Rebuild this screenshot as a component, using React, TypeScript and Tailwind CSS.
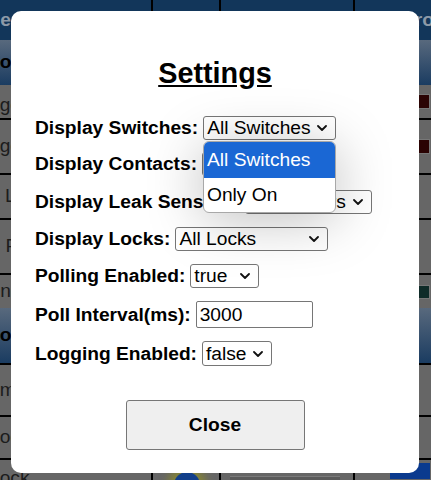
import React from "react";

function Chevron() {
  return (
    <svg width="10" height="6" viewBox="0 0 10 6" className="shrink-0">
      <path d="M1 1 L5 5 L9 1" fill="none" stroke="#111" strokeWidth="1.8" strokeLinecap="round" strokeLinejoin="round" />
    </svg>
  );
}

function FakeSelect({ text, w }: { text: string; w: string }) {
  return (
    <div className={`flex items-center justify-between h-[24px] ${w} border border-[#767676] rounded-[3px] bg-white pl-[3px] pr-[8px] text-[19.2px] leading-none text-black`}>
      <span>{text}</span>
      <Chevron />
    </div>
  );
}

function Cells({ c1, c2, c3, c4, cls }: { c1?: React.ReactNode; c2?: React.ReactNode; c3?: React.ReactNode; c4?: React.ReactNode; cls: string }) {
  return (
    <div className={`flex shrink-0 ${cls}`}>
      <div className="w-[153px] shrink-0 overflow-hidden flex items-center border-r-2 border-black">{c1}</div>
      <div className="w-[68px] shrink-0 overflow-hidden flex items-start border-r-2 border-black">{c2}</div>
      <div className="w-[134px] shrink-0 overflow-hidden flex items-start border-r-2 border-black">{c3}</div>
      <div className="w-[76px] shrink-0 overflow-hidden flex items-center">{c4}</div>
    </div>
  );
}

const red = <div className="ml-auto mr-[1px] w-[40px] h-[15px] bg-[#2a0303] border border-[#777]" />;

export default function App() {
  return (
    <div className="relative w-[431px] h-[480px] overflow-hidden bg-[#666666] font-['Liberation_Sans',Arial,sans-serif]">
      {/* dimmed background table */}
      <div className="flex flex-col text-[19.2px] whitespace-nowrap">
        <Cells
          cls="h-[40px] bg-[#12365a] text-[#8c99a7] font-bold"
          c1={<span className="ml-[-35px] flex w-full justify-between pr-[8px]"><span>Zone</span><span>Ty</span></span>}
          c2={<span className="ml-[12px] mt-[8px]">Stat</span>}
          c3={<span className="ml-[18px] mt-[8px]">Switch / Toggle</span>}
          c4={<span className="ml-[16px]">Control</span>}
        />
        <Cells
          cls="h-[45px] bg-gradient-to-b from-[#58697d] to-[#1a3c61] font-bold text-black"
          c1={<span className="ml-[-14px]">Doors</span>}
        />
        <Cells cls="h-[33px] text-[#1c1c1c]" c1={<span className="ml-[-43px] mt-[8px]">Garage Door</span>} c4={red} />
        <Cells cls="h-[55px] border-t-2 border-black text-[#1c1c1c]" c1={<span className="ml-[-43px]">Garage Side</span>} c4={red} />
        <Cells cls="h-[45px] border-t-2 border-black text-[#1c1c1c]" c1={<span className="ml-[-42px]">Door Lock</span>} />
        <Cells cls="h-[55px] border-t-2 border-black text-[#1c1c1c]" c1={<span className="ml-[-50px]">Porch Fan</span>} />
        <Cells cls="h-[35px] border-t-2 border-black text-[#1c1c1c]" c1={<span className="ml-[-53px]">Kitchen Leak</span>} c4={<div className="ml-auto mr-[1px] w-[40px] h-[14px] bg-[#0f2b28] border border-[#777]" />} />
        <Cells cls="h-[55px] bg-gradient-to-b from-[#58697d] to-[#1a3c61] font-bold text-black" c1={<span className="ml-[-46px]">Sensors</span>} />
        <Cells cls="h-[52px] border-t-2 border-black text-[#1c1c1c]" c1={<span className="ml-[-44px]">Basement</span>} />
        <Cells cls="h-[43px] border-t-2 border-black text-[#1c1c1c]" c1={<span className="ml-[-11px]">Lock</span>} />
        <Cells
          cls="h-[30px] border-t-2 border-black text-[#1c1c1c]"
          c1={<span className="ml-[-11px] self-start mt-[4px]">Lock</span>}
          c2={<div className="ml-[21px] mt-[12px] w-[26px] h-[26px] rounded-full bg-[#123f8a] shadow-[0_0_10px_6px_rgba(140,140,40,0.8)]" />}
          c3={<div className="ml-[9px] mt-[16px] w-[110px] h-[20px] bg-[#5a5a5a] border-t border-[#7a7a7a]" />}
          c4={<div className="ml-auto mr-[1px] self-start mt-[3px] w-[40px] h-[16px] bg-[#0a3a8e]" />}
        />
      </div>

      {/* modal */}
      <div className="absolute left-[11px] top-[11px] w-[408px] h-[462px] bg-white rounded-[10px] flex flex-col pl-[24px] text-black">
        <div className="mt-[46px] h-[33px] leading-[33px] text-center pr-[24px] ml-[-24px] pl-[24px]">
          <span className="text-[28.8px] font-bold underline">Settings</span>
        </div>
        <div className="flex items-center h-[24px] mt-[26px]">
          <span className="font-bold text-[19.2px] leading-none mr-[5px]">Display Switches:</span>
          <FakeSelect text="All Switches" w="w-[133px]" />
        </div>
        <div className="flex items-center h-[24px] mt-[12px]">
          <span className="font-bold text-[19.2px] leading-none mr-[5px]">Display Contacts:</span>
          <FakeSelect text="All Contacts" w="w-[130px]" />
        </div>
        <div className="flex items-center h-[24px] mt-[14px]">
          <span className="font-bold text-[19.2px] leading-none mr-[5px]">Display Leak Sensors:</span>
          <FakeSelect text="All Sensors" w="w-[127px]" />
        </div>
        <div className="flex items-center h-[24px] mt-[13px]">
          <span className="font-bold text-[19.2px] leading-none mr-[5px]">Display Locks:</span>
          <FakeSelect text="All Locks" w="w-[153px]" />
        </div>
        <div className="flex items-center h-[24px] mt-[13px]">
          <span className="font-bold text-[19.2px] leading-none mr-[5px]">Polling Enabled:</span>
          <FakeSelect text="true" w="w-[69px]" />
        </div>
        <div className="flex items-center h-[27px] mt-[13px]">
          <span className="font-bold text-[19.2px] leading-none mr-[5px]">Poll Interval(ms):</span>
          <div className="flex items-center h-[27px] w-[117px] border border-[#767676] rounded-[2px] pl-[3px] text-[19.2px] leading-none">3000</div>
        </div>
        <div className="flex items-center h-[25px] mt-[13px]">
          <span className="font-bold text-[19.2px] leading-none mr-[5px]">Logging Enabled:</span>
          <FakeSelect text="false" w="w-[70px] h-[25px]" />
        </div>
        <div className="flex justify-center pr-[24px] mt-[34px]">
          <div className="flex items-center justify-center w-[179px] h-[50px] bg-[#efefef] border border-[#767676] rounded-[3px] font-bold text-[19.2px] leading-none">
            Close
          </div>
        </div>
      </div>

      {/* open dropdown */}
      <div className="absolute left-[203px] top-[141px] w-[133px] h-[72px] bg-white rounded-[6px] border border-[#a8a8a8] overflow-hidden shadow-[0_6px_56px_rgba(0,0,0,0.26)] text-[19.2px] leading-none">
        <div className="h-[36px] flex items-center pl-[3px] bg-[#1a67d4] text-white">All Switches</div>
        <div className="h-[34px] flex items-center pl-[3px] text-black">Only On</div>
      </div>
    </div>
  );
}
